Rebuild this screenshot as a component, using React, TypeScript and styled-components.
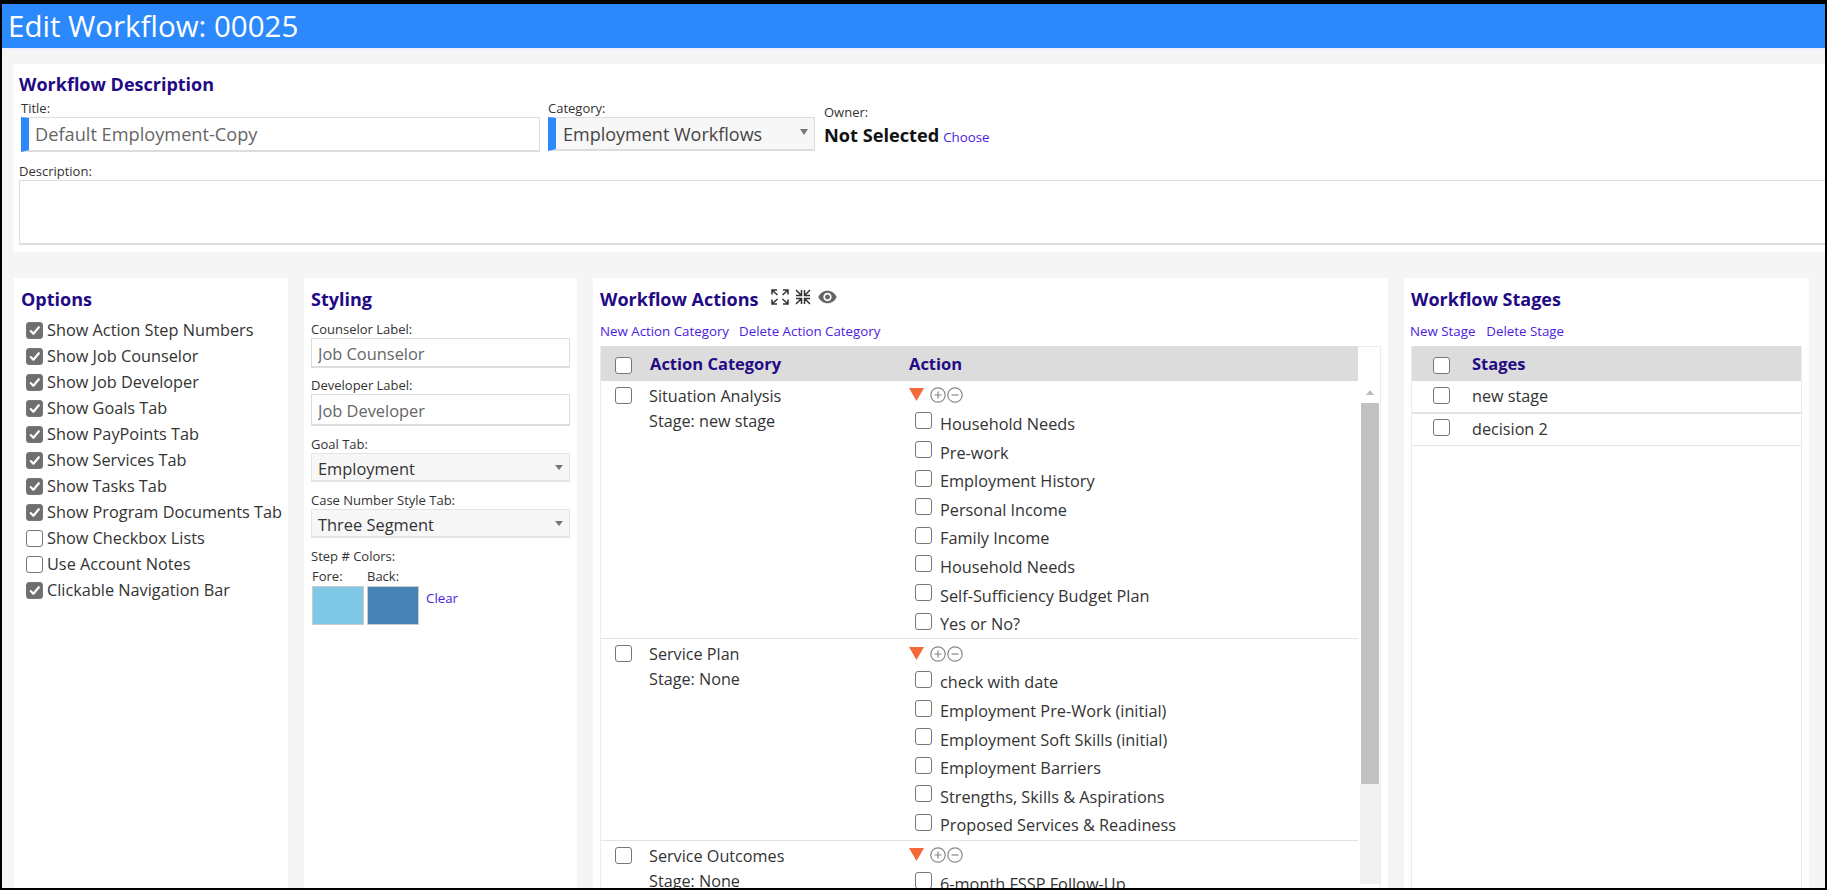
import React from "react";
import styled, { createGlobalStyle } from "styled-components";

const Global = createGlobalStyle`
  html, body { margin: 0; padding: 0; background: #000; }
  body { font-family: "Open Sans", "Noto Sans", "Liberation Sans", sans-serif; color: #333; }
  * { box-sizing: border-box; }
`;

const Frame = styled.div`
  width: 1827px;
  height: 890px;
  overflow: hidden;
  background: #f5f5f5;
  border-style: solid;
  border-color: #000;
  border-width: 4px 2px 2px 2px;
  display: flex;
  flex-direction: column;
`;
const Header = styled.header`
  flex: none;
  height: 45px;
  background: #2b89fb;
  color: #fff;
  font-size: 29.5px;
  line-height: 44px;
  padding-left: 6px;
  border-bottom: 1px solid #e8f1fd;
`;
const Main = styled.main`
  flex: 1;
  min-height: 0;
  padding: 15px 0 0 12px;
  display: flex;
  flex-direction: column;
`;
const DescriptionCard = styled.section`
  flex: none;
  height: 188px;
  margin-left: -1px;
  background: #fff;
  padding: 8px 0 0 6px;
  display: flex;
  flex-direction: column;
`;
const Heading = styled.h2`
  margin: 0;
  font-size: 18px;
  line-height: 24px;
  font-weight: 700;
  color: #230a85;
  white-space: nowrap;
`;
const TopRow = styled.div`
  display: flex;
  margin-left: 2px;
  margin-top: 3px;
  height: 63px;
`;
const Field = styled.div<{ $w: number; $mr?: number }>`
  width: ${(p) => p.$w}px;
  margin-right: ${(p) => p.$mr ?? 0}px;
  flex: none;
`;
const Label = styled.div`
  font-size: 13px;
  line-height: 18px;
  color: #333;
  white-space: nowrap;
`;
const MainInput = styled.input`
  display: block;
  width: 100%;
  height: 35px;
  border: 1px solid #ddd;
  border-bottom-width: 2px;
  border-left: 8px solid #2b89fb;
  background: #fff;
  padding: 0 0 0 6px;
  outline: none;
  font: inherit;
  font-size: 18.2px;
  color: #666;
`;
const MainSelect = styled.div`
  position: relative;
  height: 34px;
  border: 1px solid #ddd;
  border-bottom-width: 2px;
  border-left: 8px solid #2b89fb;
  background: #f7f7f7;
  padding-left: 7px;
  font-size: 18px;
  line-height: 32px;
  color: #444;
  &::after {
    content: "";
    position: absolute;
    right: 6px;
    top: 11px;
    border: 4px solid transparent;
    border-top: 6px solid #777;
    border-bottom: 0;
  }
`;
const OwnerBlock = styled.div`
  margin-left: 9px;
  padding-top: 4px;
`;
const OwnerValue = styled.div`
  display: flex;
  align-items: baseline;
  gap: 4px;
  margin-top: 2px;
`;
const StrongText = styled.span`
  font-size: 18.2px;
  font-weight: 700;
  line-height: 24px;
  color: #111;
`;
const LinkText = styled.a<{ $ml?: number }>`
  font-size: 13.3px;
  line-height: 18px;
  color: #4a20e0;
  white-space: nowrap;
  margin-left: ${(p) => p.$ml ?? 0}px;
`;
const TextArea = styled.textarea`
  display: block;
  width: 1815px;
  height: 65px;
  border: 1px solid #ddd;
  border-bottom-width: 2px;
  background: #fff;
  outline: none;
  resize: none;
`;
const Panels = styled.div`
  flex: 1;
  min-height: 0;
  margin-top: 26px;
  display: flex;
  gap: 16px;
`;
const Panel = styled.section<{ $w: number; $px: number }>`
  flex: none;
  width: ${(p) => p.$w}px;
  background: #fff;
  padding: 9px ${(p) => p.$px}px 0;
`;
const OptionList = styled.div`
  margin-top: 6px;
  padding-left: 5px;
`;
const OptionRow = styled.label`
  display: flex;
  align-items: center;
  gap: 4px;
  height: 26px;
  font-size: 16.3px;
  color: #333;
  white-space: nowrap;
`;
const Box = styled.span<{ $on?: boolean }>`
  flex: none;
  width: 17px;
  height: 17px;
  border-radius: 3px;
  border: 1px solid #777;
  background: ${(p) => (p.$on ? "#6f6f6f" : "#fff")};
  display: inline-flex;
  align-items: center;
  justify-content: center;
`;
const StyleField = styled.div<{ $mt?: number }>`
  margin-top: ${(p) => p.$mt ?? 9}px;
`;
const SmallInput = styled.input<{ $h: number }>`
  display: block;
  width: 100%;
  height: ${(p) => p.$h}px;
  border: 1px solid #ddd;
  border-width: 1px 1px 2px;
  background: #fff;
  padding: 2px 6px 0;
  outline: none;
  font: inherit;
  font-size: 16.4px;
  color: #666;
`;
const SmallSelect = styled.div`
  position: relative;
  height: 29px;
  border: 1px solid #e4e4e4;
  border-bottom-width: 2px;
  background: #f7f7f7;
  padding-left: 6px;
  font-size: 16.4px;
  line-height: 29px;
  color: #333;
  &::after {
    content: "";
    position: absolute;
    right: 6px;
    top: 11px;
    border: 4px solid transparent;
    border-top: 5px solid #777;
    border-bottom: 0;
  }
`;
const ColorGrid = styled.div`
  display: flex;
  margin-top: 2px;
  padding-left: 1px;
`;
const ColorCol = styled.div`
  width: 55px;
  flex: none;
`;
const Swatch = styled.div<{ $c: string }>`
  width: 52px;
  height: 39px;
  margin-top: 1px;
  background: ${(p) => p.$c};
  border: 1px solid #ccc;
`;
const ClearLink = styled(LinkText)`
  align-self: flex-end;
  margin: 0 0 18px 4px;
`;
const HeadingRow = styled.div`
  display: flex;
  align-items: center;
  height: 24px;
  gap: 8px;
`;
const IconWrap = styled.span<{ $ml: number }>`
  display: inline-flex;
  margin: -5px 0 0 ${(p) => p.$ml}px;
  color: #333;
`;
const LinkRow = styled.div<{ $ml?: number }>`
  display: flex;
  height: 18px;
  margin-top: 11px;
  margin-left: ${(p) => p.$ml ?? 0}px;
`;
const TableOuter = styled.div`
  margin: 6px 0 0;
  height: 600px;
  border: 1px solid #ececec;
`;
const ActionHead = styled.div`
  display: flex;
  height: 35px;
  margin-top: -1px;
`;
const ActionHeadCells = styled.div`
  width: 757px;
  background: #dcdcdc;
  display: grid;
  grid-template-columns: 49px 259px 1fr;
  align-items: center;
`;
const HeadText = styled.span`
  font-size: 16.5px;
  font-weight: 700;
  color: #230a85;
`;
const BoxCell = styled.span<{ $pl: number }>`
  display: flex;
  align-items: center;
  padding: 3px 0 0 ${(p) => p.$pl}px;
`;
const ActionBody = styled.div`
  display: flex;
`;
const Rows = styled.div`
  width: 757px;
  flex: none;
`;
const ActionRowWrap = styled.div`
  display: grid;
  grid-template-columns: 49px 259px 1fr;
  border-bottom: 1.5px solid #e3e3e3;
`;
const RowBoxCell = styled.div`
  display: flex;
  align-items: flex-start;
  padding: 6px 0 0 14px;
`;
const CategoryText = styled.div`
  padding-top: 3px;
  margin-left: -1px;
  font-size: 16.2px;
  line-height: 25px;
  color: #333;
`;
const Controls = styled.div`
  display: flex;
  align-items: center;
  height: 28.7px;
`;
const PlusMinus = styled.svg`
  flex: none;
  margin-left: 1px;
  &:first-of-type {
    margin-left: 0;
  }
`;
const ItemRow = styled.div`
  display: flex;
  align-items: center;
  height: 28.6px;
  padding-left: 6px;
  gap: 8px;
  font-size: 16.3px;
  color: #333;
  white-space: nowrap;
`;
const ItemBox = styled.span`
  display: inline-flex;
  margin-top: -6px;
`;
const ScrollTrack = styled.div`
  width: 20px;
  margin-left: 2px;
  height: 520px;
  background: #fff;
  padding-top: 9px;
`;
const ScrollArrow = styled.div`
  width: 0;
  margin: 0 auto;
  border: 4px solid transparent;
  border-bottom: 5px solid #bbb;
  border-top: 0;
`;
const ScrollThumb = styled.div`
  margin: 8px 1px 0;
  height: 381px;
  background: #c1c1c1;
`;
const ScrollRest = styled.div`
  height: 100px;
  background: #f1f1f1;
`;
const StageHead = styled.div`
  height: 35px;
  margin-top: -1px;
  background: #dcdcdc;
  display: grid;
  grid-template-columns: 60px 1fr;
  align-items: center;
`;
const StageRow = styled.div<{ $bw: number; $h: number }>`
  display: grid;
  grid-template-columns: 60px 1fr;
  height: ${(p) => p.$h}px;
  border-bottom: ${(p) => p.$bw}px solid #e3e3e3;
  font-size: 16.2px;
  line-height: 30px;
  color: #333;
`;
const StageBox = styled.div<{ $pt: number }>`
  display: flex;
  align-items: flex-start;
  padding: ${(p) => p.$pt}px 0 0 21px;
`;

const Tick = () => (
  <svg width="13" height="13" viewBox="0 0 24 24" fill="none" stroke="#fff" strokeWidth="4" strokeLinecap="round" strokeLinejoin="round">
    <path d="M5 13l5 5L20 6" />
  </svg>
);
const Check = ({ on }: { on?: boolean }) => <Box $on={on}>{on ? <Tick /> : null}</Box>;

const ExpandIcon = () => (
  <svg width="18" height="16" viewBox="0 0 18 16" fill="none" stroke="#333" strokeWidth="1.5">
    <path d="M1 5.5V1h5M17 5.5V1h-5M1 10.5V15h5M17 10.5V15h-5M1.5 1.5L6.5 6M16.5 1.5L11.5 6M1.5 14.5L6.5 10M16.5 14.5L11.5 10" />
  </svg>
);
const CompressIcon = () => (
  <svg width="16" height="16" viewBox="0 0 16 16" fill="none" stroke="#333" strokeWidth="1.5">
    <path d="M6.5 1v5.5H1M9.5 1v5.5H15M6.5 15V9.5H1M9.5 15V9.5H15M1 1l5.5 5.5M15 1L9.5 6.5M1 15l5.5-5.5M15 15L9.5 9.5" />
  </svg>
);
const EyeIcon = () => (
  <svg width="23" height="20" viewBox="0 0 24 24" fill="#666">
    <path d="M12 4.5C7 4.5 2.73 7.61 1 12c1.73 4.39 6 7.5 11 7.5s9.27-3.11 11-7.5c-1.73-4.39-6-7.5-11-7.5zM12 17c-2.76 0-5-2.24-5-5s2.24-5 5-5 5 2.24 5 5-2.24 5-5 5zm0-8c-1.66 0-3 1.34-3 3s1.34 3 3 3 3-1.34 3-3-1.34-3-3-3z" />
  </svg>
);
const RowControls = () => (
  <Controls>
    <svg width="20" height="14" viewBox="0 0 20 14"><path d="M0 0h15L7.5 13z" fill="#f4693a" /></svg>
    <PlusMinus width="16" height="16" viewBox="0 0 16 16" fill="none" stroke="#888" strokeWidth="1.2">
      <circle cx="8" cy="8" r="7.2" /><path d="M4.5 8h7M8 4.5v7" />
    </PlusMinus>
    <PlusMinus width="16" height="16" viewBox="0 0 16 16" fill="none" stroke="#888" strokeWidth="1.2">
      <circle cx="8" cy="8" r="7.2" /><path d="M4.5 8h7" />
    </PlusMinus>
  </Controls>
);

const options: [string, boolean][] = [
  ["Show Action Step Numbers", true],
  ["Show Job Counselor", true],
  ["Show Job Developer", true],
  ["Show Goals Tab", true],
  ["Show PayPoints Tab", true],
  ["Show Services Tab", true],
  ["Show Tasks Tab", true],
  ["Show Program Documents Tab", true],
  ["Show Checkbox Lists", false],
  ["Use Account Notes", false],
  ["Clickable Navigation Bar", true],
];
const actionRows = [
  {
    name: "Situation Analysis",
    stage: "Stage: new stage",
    items: ["Household Needs", "Pre-work", "Employment History", "Personal Income", "Family Income", "Household Needs", "Self-Sufficiency Budget Plan", "Yes or No?"],
  },
  {
    name: "Service Plan",
    stage: "Stage: None",
    items: ["check with date", "Employment Pre-Work (initial)", "Employment Soft Skills (initial)", "Employment Barriers", "Strengths, Skills & Aspirations", "Proposed Services & Readiness"],
  },
  {
    name: "Service Outcomes",
    stage: "Stage: None",
    items: ["6-month FSSP Follow-Up"],
  },
];

export default function App() {
  return (
    <Frame>
      <Global />
      <Header>Edit Workflow: 00025</Header>
      <Main>
        <DescriptionCard>
          <Heading>Workflow Description</Heading>
          <TopRow>
            <Field $w={519} $mr={8}>
              <Label>Title:</Label>
              <MainInput readOnly value="Default Employment-Copy" />
            </Field>
            <Field $w={267}>
              <Label>Category:</Label>
              <MainSelect>Employment Workflows</MainSelect>
            </Field>
            <OwnerBlock>
              <Label>Owner:</Label>
              <OwnerValue>
                <StrongText>Not Selected</StrongText>
                <LinkText>Choose</LinkText>
              </OwnerValue>
            </OwnerBlock>
          </TopRow>
          <Label>Description:</Label>
          <TextArea readOnly />
        </DescriptionCard>
        <Panels>
          <Panel $w={274} $px={7}>
            <Heading>Options</Heading>
            <OptionList>
              {options.map(([t, on]) => (
                <OptionRow key={t}><Check on={on} />{t}</OptionRow>
              ))}
            </OptionList>
          </Panel>
          <Panel $w={273} $px={7}>
            <Heading>Styling</Heading>
            <StyleField>
              <Label>Counselor Label:</Label>
              <SmallInput $h={30} readOnly value="Job Counselor" />
            </StyleField>
            <StyleField $mt={8}>
              <Label>Developer Label:</Label>
              <SmallInput $h={32} readOnly value="Job Developer" />
            </StyleField>
            <StyleField>
              <Label>Goal Tab:</Label>
              <SmallSelect>Employment</SmallSelect>
            </StyleField>
            <StyleField>
              <Label>Case Number Style Tab:</Label>
              <SmallSelect>Three Segment</SmallSelect>
            </StyleField>
            <StyleField>
              <Label>Step # Colors:</Label>
              <ColorGrid>
                <ColorCol>
                  <Label>Fore:</Label>
                  <Swatch $c="#7ec8e6" />
                </ColorCol>
                <ColorCol>
                  <Label>Back:</Label>
                  <Swatch $c="#4682b4" />
                </ColorCol>
                <ClearLink>Clear</ClearLink>
              </ColorGrid>
            </StyleField>
          </Panel>
          <Panel $w={795} $px={7}>
            <HeadingRow>
              <Heading>Workflow Actions</Heading>
              <IconWrap $ml={5}><ExpandIcon /></IconWrap>
              <IconWrap $ml={-2}><CompressIcon /></IconWrap>
              <IconWrap $ml={-3}><EyeIcon /></IconWrap>
            </HeadingRow>
            <LinkRow>
              <LinkText>New Action Category</LinkText>
              <LinkText $ml={10}>Delete Action Category</LinkText>
            </LinkRow>
            <TableOuter>
              <ActionHead>
                <ActionHeadCells>
                  <BoxCell $pl={14}><Check /></BoxCell>
                  <HeadText>Action Category</HeadText>
                  <HeadText>Action</HeadText>
                </ActionHeadCells>
              </ActionHead>
              <ActionBody>
                <Rows>
                  {actionRows.map((r) => (
                    <ActionRowWrap key={r.name}>
                      <RowBoxCell><Check /></RowBoxCell>
                      <CategoryText>{r.name}<br />{r.stage}</CategoryText>
                      <div>
                        <RowControls />
                        {r.items.map((it, i) => (
                          <ItemRow key={i}><ItemBox><Check /></ItemBox>{it}</ItemRow>
                        ))}
                      </div>
                    </ActionRowWrap>
                  ))}
                </Rows>
                <ScrollTrack>
                  <ScrollArrow />
                  <ScrollThumb />
                  <ScrollRest />
                </ScrollTrack>
              </ActionBody>
            </TableOuter>
          </Panel>
          <Panel $w={405} $px={7}>
            <Heading>Workflow Stages</Heading>
            <LinkRow $ml={-1}>
              <LinkText>New Stage</LinkText>
              <LinkText $ml={11}>Delete Stage</LinkText>
            </LinkRow>
            <TableOuter>
              <StageHead>
                <BoxCell $pl={21}><Check /></BoxCell>
                <HeadText>Stages</HeadText>
              </StageHead>
              <StageRow $bw={2} $h={33}>
                <StageBox $pt={6}><Check /></StageBox>
                <div>new stage</div>
              </StageRow>
              <StageRow $bw={1} $h={32}>
                <StageBox $pt={5}><Check /></StageBox>
                <div>decision 2</div>
              </StageRow>
            </TableOuter>
          </Panel>
        </Panels>
      </Main>
    </Frame>
  );
}
